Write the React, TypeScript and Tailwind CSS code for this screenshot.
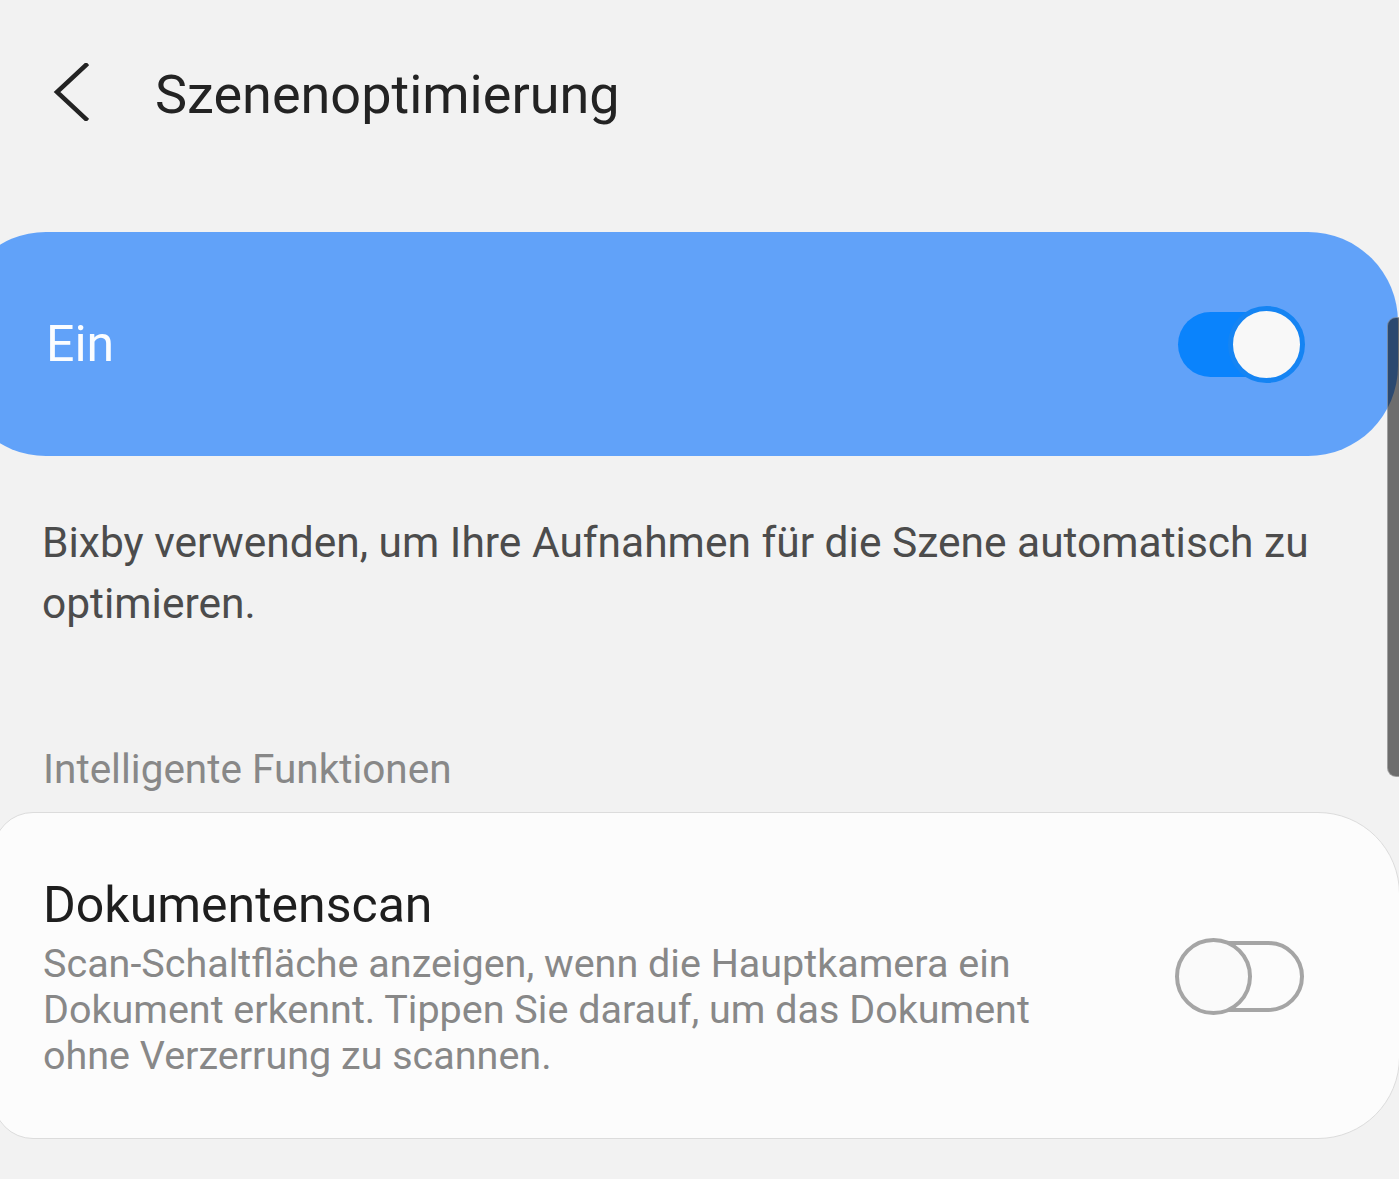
import React from 'react';

const font = { fontFamily: 'Roboto, "Noto Sans", sans-serif' };

const BackIcon = () => (
  <svg width="36" height="58" viewBox="0 0 36 58" fill="none" className="shrink-0">
    <polyline
      points="33,2 4,29 33,56"
      stroke="#232323"
      strokeWidth="4.5"
      strokeLinecap="square"
      strokeLinejoin="miter"
    />
  </svg>
);

const ToggleOn = () => (
  <div className="relative h-[77px] w-[127px] shrink-0">
    <div className="absolute left-0 top-[6px] h-[65px] w-[110px] rounded-full bg-[#0a83fc]" />
    <div className="absolute right-0 top-0 h-[77px] w-[77px] rounded-full border-[5px] border-[#1584f3] bg-[#f8f8f8]" />
  </div>
);

const ToggleOff = () => (
  <div className="relative mb-[6px] h-[77px] w-[129px] shrink-0">
    <div className="absolute right-0 top-[3px] h-[71px] w-[110px] rounded-full border-[4px] border-[#a5a5a5]" />
    <div className="absolute left-0 top-0 h-[77px] w-[77px] rounded-full border-[4px] border-[#a5a5a5] bg-[#fafafa]" />
  </div>
);

export default function App() {
  return (
    <div className="relative min-h-screen w-full overflow-hidden bg-[#f2f2f2]" style={font}>
      {/* header */}
      <header className="flex items-start pl-[53px] pt-[63px]">
        <BackIcon />
        <h1 className="ml-[66px] mt-[5px] text-[54px] leading-[54px] font-normal text-[#232323]">
          Szenenoptimierung
        </h1>
      </header>

      {/* master switch */}
      <div className="ml-[-44px] mt-[110px] flex h-[224px] w-[1442px] items-center justify-between rounded-[90px] bg-[#61a2f9] pl-[90px] pr-[93px]">
        <span className="text-[50px] leading-[50px] text-[#fbfdff]">Ein</span>
        <ToggleOn />
      </div>

      <p className="mt-[56px] w-[1360px] pl-[42px] text-[42.5px] leading-[61px] text-[#4c4c4c]">
        Bixby verwenden, um Ihre Aufnahmen für die Szene automatisch zu optimieren.
      </p>

      <div className="mt-[115px] pl-[43px] text-[40.5px] leading-[40px] text-[#888888]">
        Intelligente Funktionen
      </div>

      {/* settings card */}
      <div className="ml-[-7px] mt-[23px] flex w-[1407px] items-center justify-between rounded-l-[40px] rounded-r-[82px] border border-[#dcdcdc] bg-[#fcfcfc] pb-[59px] pl-[49px] pr-[95px] pt-[67px]">
        <div>
          <div className="text-[50px] leading-[50px] text-[#1e1e1e]">Dokumentenscan</div>
          <p className="mt-[11px] max-w-[1040px] text-[39.5px] leading-[46px] text-[#888888]">
            Scan-Schaltfläche anzeigen, wenn die Hauptkamera ein Dokument erkennt. Tippen Sie darauf, um das Dokument ohne Verzerrung zu scannen.
          </p>
        </div>
        <ToggleOff />
      </div>

      {/* scroll indicator */}
      <div className="absolute left-[1387px] top-[317px] h-[460px] w-[20px] rounded-l-[9px] border border-white/35 bg-black/55" />
    </div>
  );
}
